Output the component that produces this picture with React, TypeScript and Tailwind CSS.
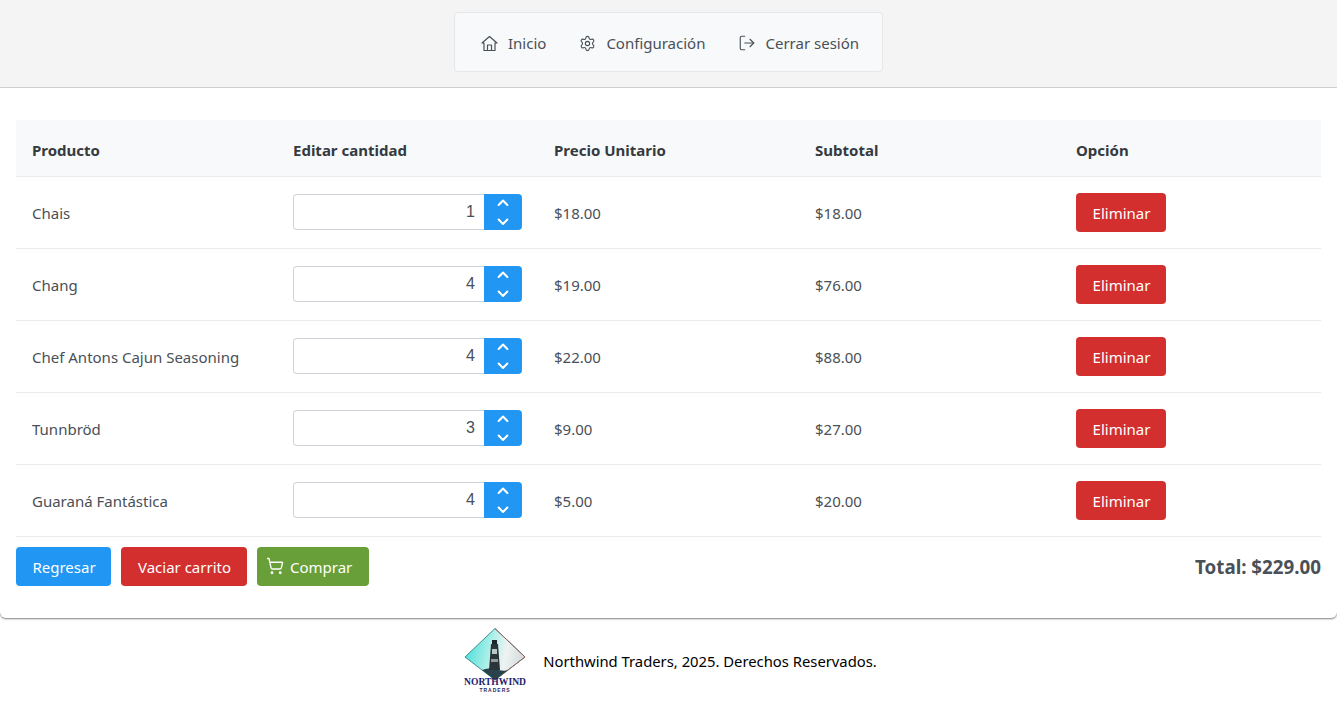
import { ChevronDown, ChevronUp, LogOut, Settings, ShoppingCart } from 'lucide-react';

const items = [
    { name: 'Chais', qty: 1, price: '$18.00', subtotal: '$18.00' },
    { name: 'Chang', qty: 4, price: '$19.00', subtotal: '$76.00' },
    { name: 'Chef Antons Cajun Seasoning', qty: 4, price: '$22.00', subtotal: '$88.00' },
    { name: 'Tunnbröd', qty: 3, price: '$9.00', subtotal: '$27.00' },
    { name: 'Guaraná Fantástica', qty: 4, price: '$5.00', subtotal: '$20.00' },
];

function HomeIcon() {
    return (
        <svg width="17" height="17" viewBox="0 0 17 17" fill="none" stroke="currentColor" strokeWidth="1.2" strokeLinejoin="round" strokeLinecap="round">
            <path d="M1 8 L8.5 1.5 L16 8 L14 8 L14 15.5 L3 15.5 L3 8 Z" />
            <path d="M6.5 15.5 L6.5 10 L10.5 10 L10.5 15.5" />
        </svg>
    );
}

function Logo() {
    return (
        <svg width="66" height="66" viewBox="0 0 66 66" className="shrink-0 overflow-visible">
            <defs>
                <linearGradient id="sky" x1="0" y1="0" x2="1" y2="0.2">
                    <stop offset="0" stopColor="#36dcd8" />
                    <stop offset="0.5" stopColor="#b4f0ea" />
                    <stop offset="0.75" stopColor="#eef2f2" />
                    <stop offset="1" stopColor="#d8dfdf" />
                </linearGradient>
            </defs>
            <polygon points="33,0.5 63,29 33,52 3,29" fill="url(#sky)" stroke="#3d8f8c" strokeWidth="1" />
            <path d="M33 0.5 L63 29 L33 52" fill="none" stroke="#a0605c" strokeWidth="1" />
            <path d="M20 42 Q28 39 33 41 Q42 44 46 42 L33 52 Z" fill="#28434c" />
            <rect x="30" y="12" width="5" height="4" fill="#1d2528" />
            <polygon points="29,16 36,16 38,42 27,42" fill="#2b3438" />
            <rect x="30" y="21" width="5" height="5" fill="#b9c6c6" />
            <rect x="29" y="31" width="7" height="3" fill="#8e9a9a" />
            <text x="33" y="57" textAnchor="middle" fontFamily="Liberation Serif, serif" fontWeight="700" fontSize="11" textLength="62" lengthAdjust="spacingAndGlyphs" fill="#1c1c6e">NORTHWIND</text>
            <text x="33" y="64" textAnchor="middle" fontFamily="Liberation Sans, sans-serif" fontWeight="700" fontSize="5" letterSpacing="1" fill="#2a2a5e">TRADERS</text>
        </svg>
    );
}

function QtyInput({ value }: { value: number }) {
    return (
        <div className="flex h-[36px] w-[229px]">
            <div className="flex flex-1 items-center justify-end rounded-l-[4px] border border-r-0 border-[#ced4da] bg-white pr-[9px] font-['Liberation_Sans',sans-serif] text-[16px] text-[#495057]">
                {value}
            </div>
            <div className="flex w-[38px] flex-col items-center justify-center gap-[1px] rounded-r-[4px] bg-[#2196f3] text-white">
                <ChevronUp className="h-[18px] w-[18px]" strokeWidth={2.8} />
                <ChevronDown className="h-[18px] w-[18px]" strokeWidth={2.8} />
            </div>
        </div>
    );
}

export default function App() {
    return (
        <div className="h-[703px] overflow-hidden bg-white font-['Noto_Sans','Open_Sans',sans-serif] text-[15px] text-[#495057]">
            <header className="flex h-[88px] items-start justify-center border-b border-[#d4d4d6] bg-[#f4f4f5] pt-[12px]">
                <nav className="flex h-[60px] w-[429px] items-center gap-[33px] rounded-[4px] border border-[#e5e7eb] bg-[#f8f9fa] pl-[26px] pt-[2px]">
                    <a className="flex items-center gap-[10px]"><HomeIcon />Inicio</a>
                    <a className="flex items-center gap-[10px]"><Settings className="h-[17px] w-[17px]" strokeWidth={1.6} />Configuración</a>
                    <a className="flex items-center gap-[9px]"><LogOut className="h-[18px] w-[18px]" strokeWidth={1.5} />Cerrar sesión</a>
                </nav>
            </header>

            <main className="h-[530px] rounded-b-[6px] bg-white px-[16px] pt-[32px] shadow-[0_1px_2px_rgba(0,0,0,0.5)]">
                <table className="w-full table-fixed border-collapse">
                    <thead>
                        <tr className="h-[56px] border-b border-[#e9ecef] bg-[#f8f9fa] text-left text-[#343a40]">
                            {['Producto', 'Editar cantidad', 'Precio Unitario', 'Subtotal', 'Opción'].map(h => (
                                <th key={h} className="px-[16px] pt-[5px] font-bold">{h}</th>
                            ))}
                        </tr>
                    </thead>
                    <tbody>
                        {items.map(item => (
                            <tr key={item.name} className="h-[72px] border-b border-[#e9ecef]">
                                <td className="px-[16px] pt-[3px]">{item.name}</td>
                                <td className="px-[16px]"><QtyInput value={item.qty} /></td>
                                <td className="px-[16px] pt-[3px]">{item.price}</td>
                                <td className="px-[16px] pt-[3px]">{item.subtotal}</td>
                                <td className="px-[16px]">
                                    <button className="h-[39px] w-[90px] rounded-[4px] bg-[#d32f2f] pl-[1px] pt-[2px] text-white">Eliminar</button>
                                </td>
                            </tr>
                        ))}
                    </tbody>
                </table>

                <div className="mt-[10px] flex items-center justify-between">
                    <div className="flex gap-[10px]">
                        <button className="h-[39px] w-[95px] rounded-[4px] bg-[#2196f3] pl-[1px] pt-[2px] text-white">Regresar</button>
                        <button className="h-[39px] w-[126px] rounded-[4px] bg-[#d32f2f] pl-[1px] pt-[2px] text-white">Vaciar carrito</button>
                        <button className="flex h-[39px] w-[112px] items-center gap-[6px] rounded-[4px] bg-[#689f38] pl-[9px] text-white">
                            <ShoppingCart className="h-[18px] w-[18px]" strokeWidth={1.8} />
                            <span className="pt-[2px]">Comprar</span>
                        </button>
                    </div>
                    <span className="pt-[3px] text-[18.75px] font-bold">Total: $229.00</span>
                </div>
            </main>

            <footer className="flex h-[85px] items-center justify-center gap-[15px] pl-[2px] text-[14.8px] text-black">
                <Logo />
                <span className="pt-[2px]">Northwind Traders, 2025. Derechos Reservados.</span>
            </footer>
        </div>
    );
}
